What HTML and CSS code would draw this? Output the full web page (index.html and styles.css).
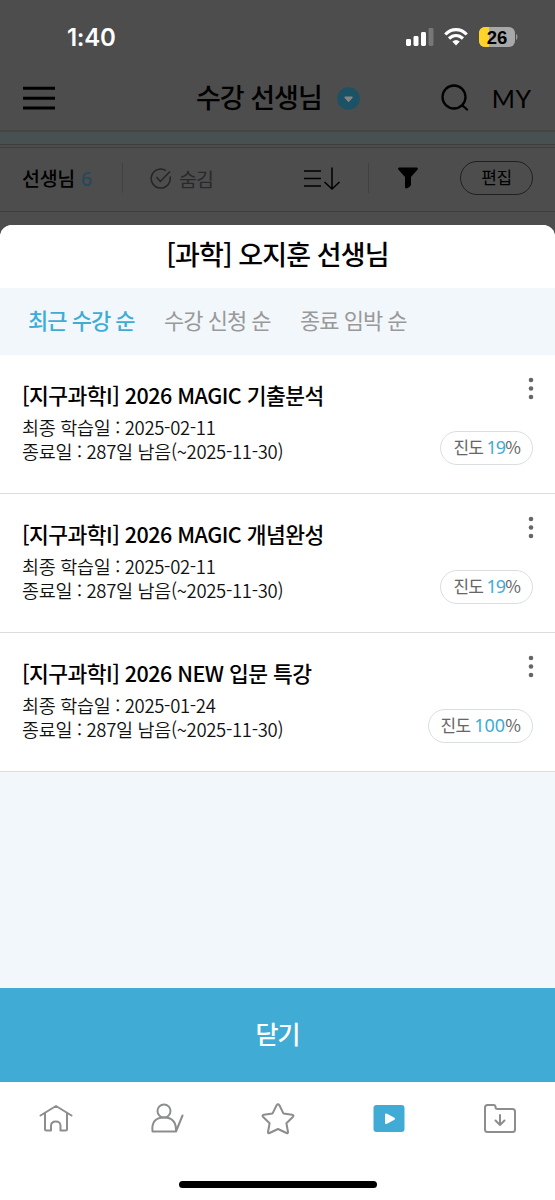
FILE: index.html
```html
<!DOCTYPE html>
<html lang="ko">
<head>
<meta charset="utf-8">
<meta name="viewport" content="width=device-width">
<title>수강 선생님</title>
<link rel="stylesheet" href="styles.css">
</head>
<body>
<div class="screen">
  <div class="backdrop">
    <div class="status">
      <span class="time">1:40</span>
      <svg class="status-icons" width="112" height="22" viewBox="0 0 112 22">
        <g fill="#fff"><rect x="0" y="13" width="5" height="7" rx="1.4"/><rect x="7.500" y="10" width="5" height="10" rx="1.400"/><rect x="15" y="6" width="5" height="14" rx="1.400"/></g>
        <rect x="22.500" y="2" width="5" height="18" rx="1.400" fill="#777"/>
        <g fill="none" stroke="#fff" stroke-width="3.200"><path d="M39.300 8.500C45.500 2 54.500 2 60.700 8.500"/><path d="M43 12.500c4.300-4 9.700-4 14 0"/></g>
        <path d="M46.300 15.500c2.500-2 5-2 7.500 0L50 19.600z" fill="#fff"/>
        <rect x="73" y="1" width="36" height="20" rx="6" fill="#a8a8a8"/>
        <path d="M79 1h4v20h-4a6 6 0 0 1-6-6V7a6 6 0 0 1 6-6z" fill="#ffd426"/>
        <path d="M110 7.500q3 3.500 0 7z" fill="#999"/>
        <text x="91" y="17.500" class="battery" text-anchor="middle">26</text>
      </svg>
    </div>
    <header class="header">
      <svg width="32" height="24" viewBox="0 0 32 24" stroke="#000" stroke-width="3"><path d="M0 2.200h32M0 12.200h32M0 22h32"/></svg>
      <h1 class="header-title">수강 선생님</h1>
      <svg class="chevron" width="23" height="23" viewBox="0 0 23 23"><circle cx="11.500" cy="11.500" r="11.300" fill="#1b5265"/><path d="M8.300 10.500h6.500l-3.250 3.500z" fill="#858585" stroke="#858585" stroke-width="1.800" stroke-linejoin="round"/></svg>
      <svg class="search" width="28" height="28" viewBox="0 0 28 28" fill="none" stroke="#000" stroke-width="2.300" stroke-linecap="round"><circle cx="13" cy="13" r="11.500"/><path d="m21.500 21.500 4.500 4"/></svg>
      <span class="my">MY</span>
    </header>
    <div class="strip"></div>
    <div class="toolbar">
      <span class="teacher">선생님 <span class="teacher-count">6</span></span>
      <i class="divider"></i>
      <svg class="check" width="22" height="22" viewBox="0 0 22 22" fill="none" stroke="#252525" stroke-width="1.500"><path d="M15.800 2.500A9.500 9.500 0 1 0 20 8.500M6.500 9l3.800 4.500L20 3.500"/></svg>
      <span class="hide">숨김</span>
      <svg class="sort" width="38" height="24" viewBox="0 0 38 24" fill="none" stroke="#000" stroke-width="1.500"><path d="M1 4h17M1 11.500h17M1 19h17M29 .5V22M21.500 15l7.500 7 7.500-7"/></svg>
      <i class="divider divider-second"></i>
      <svg class="filter" width="22" height="23" viewBox="0 0 22 23"><path d="M2 .5h18q1.500.5.600 2L14 10V17.500q0 2-4.500 4-1.500 0-1.500-1.500v-10L1.300 2.500Q.5 1 2 .5z"/></svg>
      <span class="edit">편집</span>
    </div>
  </div>
  <main class="sheet">
    <h2 class="sheet-title">[과학] 오지훈 선생님</h2>
    <nav class="tabs"><span class="tab active">최근 수강 순</span><span class="tab">수강 신청 순</span><span class="tab">종료 임박 순</span></nav>
    <article class="course">
      <h3 class="course-title">[지구과학I] 2026 MAGIC 기출분석</h3>
      <p class="detail">최종 학습일 : 2025-02-11</p>
      <p class="detail">종료일 : 287일 남음(~2025-11-30)</p>
      <svg class="more" width="6" height="24" viewBox="0 0 6 24" fill="#666"><circle cx="3" cy="3" r="2.300"/><circle cx="3" cy="11.500" r="2.300"/><circle cx="3" cy="20" r="2.300"/></svg>
      <span class="progress">진도 <b class="value tight">19</b>%</span>
    </article>
    <article class="course">
      <h3 class="course-title">[지구과학I] 2026 MAGIC 개념완성</h3>
      <p class="detail">최종 학습일 : 2025-02-11</p>
      <p class="detail">종료일 : 287일 남음(~2025-11-30)</p>
      <svg class="more" width="6" height="24" viewBox="0 0 6 24" fill="#666"><circle cx="3" cy="3" r="2.300"/><circle cx="3" cy="11.500" r="2.300"/><circle cx="3" cy="20" r="2.300"/></svg>
      <span class="progress">진도 <b class="value tight">19</b>%</span>
    </article>
    <article class="course">
      <h3 class="course-title">[지구과학I] 2026 NEW 입문 특강</h3>
      <p class="detail">최종 학습일 : 2025-01-24</p>
      <p class="detail">종료일 : 287일 남음(~2025-11-30)</p>
      <svg class="more" width="6" height="24" viewBox="0 0 6 24" fill="#666"><circle cx="3" cy="3" r="2.300"/><circle cx="3" cy="11.500" r="2.300"/><circle cx="3" cy="20" r="2.300"/></svg>
      <span class="progress">진도 <b class="value">100</b>%</span>
    </article>
  </main>
  <button class="close">닫기</button>
  <footer class="bottom">
    <nav class="dock">
      <svg class="dock-icon" viewBox="0 0 34 34"><path d="M1.500 13.500 17 4l15.500 9.500M6 11v16q0 1.500 1.500 1.500H12V24q0-4.500 4.800-4.500T21.500 24v4.500h5q1.500 0 1.500-1.500V11"/></svg>
      <svg class="dock-icon" viewBox="0 0 34 34"><circle cx="14" cy="9" r="6.500"/><path d="M26 29.500H2.500Q1 15.500 14 15.500q12 0 12 12.500zL32.500 13.500"/></svg>
      <svg class="dock-icon" viewBox="0 0 34 34"><path d="M15.600 3.200q1.400-2 2.800 0l4 8.200 8.700 1.300q2.300.5.700 2.300l-6.400 6.200 1.600 8.800q.1 1.700-1.500 1L17 27l-8.500 4q-1.600.7-1.500-1l1.600-8.800L2.200 15q-1.600-1.800.7-2.300l8.700-1.300z"/></svg>
      <svg class="dock-icon" viewBox="0 0 34 34"><rect x="1.500" y="3" width="31" height="27" rx="3" fill="#40acd6" stroke="none"/><path d="M14 12.500v8.500l8-4.250z" fill="#fff" stroke="#fff"/></svg>
      <svg class="dock-icon" viewBox="0 0 34 34"><path d="M4.500 3h6q2 0 2 2 0 2 2 2h15q2.500 0 2.500 2.500v18q0 2.500-2.500 2.500h-25Q2 30 2 27.500v-22Q2 3 4.500 3zM17 13v10m-4.500-4.500L17 23l4.500-4.500"/></svg>
    </nav>
    <div class="home-bar"></div>
  </footer>
</div>
</body>
</html>
```
FILE: styles.css
```css
* { box-sizing: border-box; }
body { margin: 0; font-family: "Noto Sans CJK KR", "Noto Sans", sans-serif; color: #000; }
h1, h2, h3, p { margin: 0; }
svg { display: block; flex: none; }
.screen { width: 555px; height: 1200px; display: flex; flex-direction: column; background: #4d4d4d; overflow: hidden; }
.backdrop { height: 225px; flex: none; background: #4d4d4d; }
.status { height: 66px; display: flex; justify-content: space-between; padding: 26px 37px 0 67px; }
.time { font: 600 24px/24px Inter, sans-serif; color: #fff; letter-spacing: -.3px; }
.battery { font: 700 18.5px "Liberation Sans", sans-serif; }
.header { height: 64px; display: flex; align-items: center; padding-left: 23px; }
.header-title { margin-left: 141px; padding-bottom: 3px; font-size: 27px; line-height: 36px; font-weight: 500; letter-spacing: -1px; white-space: nowrap; }
.chevron { margin-left: 15px; }
.search { margin-left: 81px; }
.my { margin-left: 23px; font: 400 25px/30px Lato, sans-serif; letter-spacing: .6px; }
.strip { height: 15px; background: #495052; border-top: 2px solid #454545; border-bottom: 1px solid #3d3d3d; }
.toolbar { height: 67px; border-bottom: 1px solid #3d3d3d; display: flex; align-items: center; padding: 0 0 0 22px; box-shadow: inset 0 2px #4d4d4d, inset 0 3px #3d3d3d; }
.teacher { width: 100px; flex: none; padding-bottom: 1px; font-size: 19.5px; font-weight: 500; letter-spacing: -.3px; white-space: nowrap; }
.teacher-count { color: #1b4a5d; font-weight: 400; font-family: "Noto Sans", sans-serif; margin-left: 1px; }
.divider { width: 1px; height: 30px; flex: none; background: #414141; }
.check { margin: 2px 0 0 27px; }
.hide { margin-left: 7px; width: 36px; font-size: 19.5px; letter-spacing: -1px; color: #292929; white-space: nowrap; }
.sort { margin: 1px 0 0 88px; }
.divider-second { margin-left: 27px; }
.filter { margin: 1px 0 0 28px; }
.edit { margin-left: 41px; width: 73px; height: 34px; border: 1px solid #202020; border-radius: 17px; text-align: center; font-size: 17px; line-height: 29px; letter-spacing: -.5px; }
.sheet { height: 763px; flex: none; background: #f2f7fb; border-radius: 12px 12px 0 0; overflow: hidden; }
.sheet-title { height: 63px; background: #fff; text-align: center; font-size: 27px; line-height: 57px; font-weight: 500; letter-spacing: -.9px; }
.tabs { height: 67px; display: flex; gap: 29px; padding-left: 28px; font-size: 22px; line-height: 62px; color: #999; letter-spacing: -1px; }
.tab { width: 107px; white-space: nowrap; flex: none; }
.active { color: #40acd6; font-weight: 500; }
.course { height: 139px; background: #fff; border-bottom: 1px solid #ddd; padding: 28px 22px 0 22px; display: grid; grid-template-columns: 1fr auto; grid-template-rows: 32px 24px 24px; align-content: start; }
.course-title { grid-area: 1 / 1; font-size: 21.5px; line-height: 24px; font-weight: 500; letter-spacing: -.53px; white-space: nowrap; }
.detail { grid-column: 1; font-size: 18.5px; line-height: 24px; font-weight: 350; letter-spacing: -.32px; white-space: nowrap; color: #111; }
.more { grid-area: 1 / 2; justify-self: end; margin: -6px -1px 0 0; }
.progress { grid-area: 2 / 2 / 4 / 3; justify-self: end; height: 34px; margin-top: 16px; padding: 0 12px; border: 1px solid #d9dfe0; border-radius: 17px; color: #666; font-size: 17px; line-height: 30px; letter-spacing: -.8px; white-space: nowrap; }
.value { color: #40acd6; font: 400 18px/20px "Noto Sans", sans-serif; letter-spacing: 0; }
.tight { letter-spacing: -1px; margin-left: -.5px; }
.close { height: 94px; flex: none; padding: 0 0 4px; border: 0; background: #40acd6; color: #fff; font: 500 25px "Noto Sans CJK KR", sans-serif; letter-spacing: -1px; }
.bottom { flex: 1; background: #fff; }
.dock { height: 74px; display: grid; grid-template-columns: repeat(5, 1fr); align-items: center; justify-items: center; }
.dock-icon { width: 34px; height: 34px; fill: none; stroke: #8c8e8d; stroke-width: 2; stroke-linejoin: round; stroke-linecap: round; }
.home-bar { width: 198px; height: 7px; margin: 25px auto 0; border-radius: 4px; background: #000; }
```
